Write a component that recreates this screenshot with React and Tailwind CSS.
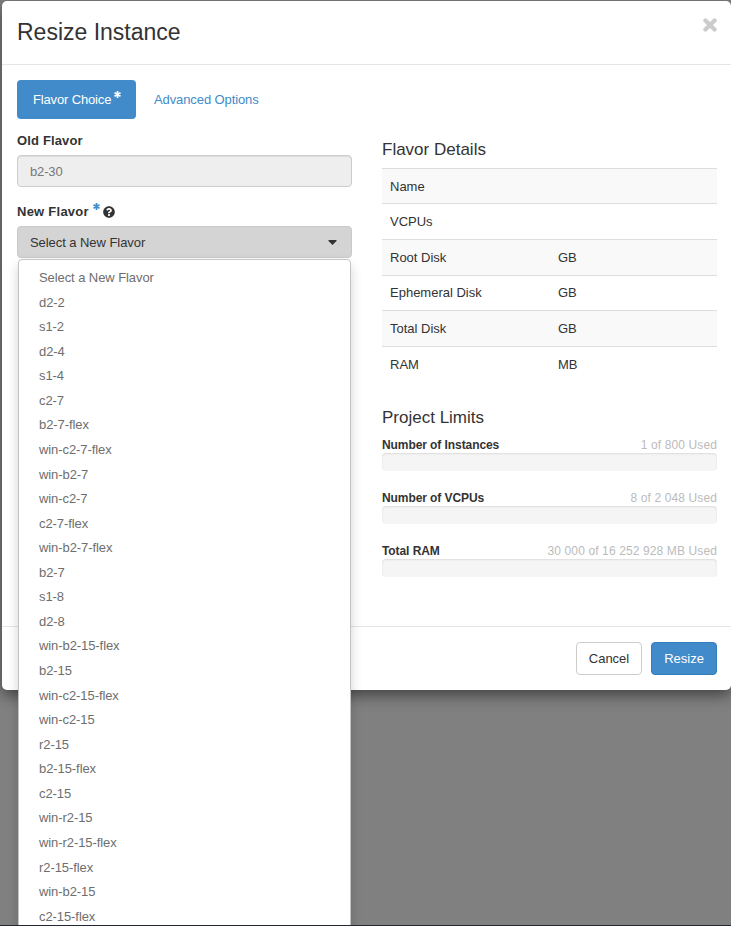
import React from "react";
import { FaQuestionCircle } from "react-icons/fa";

const FLAVORS = [
  "Select a New Flavor", "d2-2", "s1-2", "d2-4", "s1-4", "c2-7", "b2-7-flex",
  "win-c2-7-flex", "win-b2-7", "win-c2-7", "c2-7-flex", "win-b2-7-flex", "b2-7",
  "s1-8", "d2-8", "win-b2-15-flex", "b2-15", "win-c2-15-flex", "win-c2-15",
  "r2-15", "b2-15-flex", "c2-15", "win-r2-15", "win-r2-15-flex", "r2-15-flex",
  "win-b2-15", "c2-15-flex",
];

const DETAILS = [
  ["Name", "", "h-[35px] pt-px"],
  ["VCPUs", "", "h-[36px]"],
  ["Root Disk", "GB", "h-[36px]"],
  ["Ephemeral Disk", "GB", "h-[35px]"],
  ["Total Disk", "GB", "h-[36px]"],
  ["RAM", "MB", "h-[36px]"],
];

const LIMITS = [
  ["Number of Instances", "1 of 800 Used"],
  ["Number of VCPUs", "8 of 2 048 Used"],
  ["Total RAM", "30 000 of 16 252 928 MB Used"],
];

function Asterisk({ className }) {
  return (
    <svg viewBox="0 0 7 7" className={className} stroke="currentColor" strokeWidth="1.7">
      <path d="M3.5 0v7M.5 1.8l6 3.4M.5 5.2l6-3.4" />
    </svg>
  );
}

function CloseIcon({ className }) {
  return (
    <svg viewBox="0 0 14 14" className={className} stroke="currentColor" strokeWidth="4.2" strokeLinecap="round">
      <path d="M2.4 2.4l9.2 9.2M11.6 2.4l-9.2 9.2" />
    </svg>
  );
}

function FlavorMenu() {
  return (
    <ul className="absolute left-px top-full mt-px h-[700px] w-[333px] rounded border border-[#c4c4c4] bg-white py-[5px] shadow-[0_6px_12px_rgba(0,0,0,0.175)]">
      {FLAVORS.map((name) => (
        <li key={name} className="h-[24.57px] px-5 leading-[25px] tracking-[-0.08px] text-[#6e6e6e]">
          {name}
        </li>
      ))}
    </ul>
  );
}

function FlavorForm() {
  return (
    <div className="w-[335px] shrink-0 pt-3">
      <label className="block h-[24px] font-bold leading-[19px] tracking-[0.15px]">Old Flavor</label>
      <div className="flex h-8 items-center rounded border border-[#ccc] bg-[#eee] px-3 pt-px text-[#777] tracking-[-0.15px] shadow-[inset_0_1px_1px_rgba(0,0,0,0.075)]">
        b2-30
      </div>
      <div className="mt-[15px] flex h-6 items-start leading-[19px]">
        <label className="w-[76px] font-bold tracking-[0.25px]">New Flavor</label>
        <Asterisk className="mt-px size-[7px] text-[#428bca]" />
        <FaQuestionCircle className="ml-[3px] mt-[4px] size-[12px]" />
      </div>
      <div className="relative">
        <button className="flex h-8 w-full items-center justify-between rounded border border-[#c9c9c9] bg-[#d4d4d4] pl-3 pr-[14px]">
          <span className="pt-px tracking-[-0.06px]">Select a New Flavor</span>
          <svg width="9" height="5" viewBox="0 0 9 5" fill="#333">
            <path d="M.5 0h8v1L4.5 5 .5 1z" />
          </svg>
        </button>
        <FlavorMenu />
      </div>
    </div>
  );
}

function FlavorInfo() {
  return (
    <div className="w-[335px] shrink-0 pt-[21px]">
      <h4 className="h-[28px] text-[17px] leading-[20px]">Flavor Details</h4>
      <div>
        {DETAILS.map(([name, unit, height]) => (
          <div key={name} className={`flex items-center border-t border-[#ddd] px-2 odd:bg-[#f9f9f9] ${height}`}>
            <span className="w-[168px]">{name}</span>
            <span>{unit}</span>
          </div>
        ))}
      </div>
      <h4 className="mt-[26px] h-[29px] text-[17px] leading-[20px]">Project Limits</h4>
      {LIMITS.map(([name, used]) => (
        <div key={name} className="h-[53px] text-[12px]">
          <div className="flex h-[16px] items-center justify-between leading-[16px]">
            <strong className="tracking-[-0.08px]">{name}</strong>
            <span className="tracking-[0.12px] text-[#bbb]">{used}</span>
          </div>
          <div className="h-[18px] rounded bg-[#f5f5f5] shadow-[inset_0_1px_2px_rgba(0,0,0,0.1)]" />
        </div>
      ))}
    </div>
  );
}

export default function App() {
  return (
    <div className="flex h-[926px] w-[731px] flex-col overflow-hidden bg-[#808080] font-['Liberation_Sans',Arial,sans-serif] text-[13px] text-[#333]">
      <div className="h-[925px] overflow-hidden pl-[2px] pt-px">
        <div className="flex h-[689px] w-[729px] flex-col rounded-[5px] bg-white shadow-[0_5px_15px_rgba(0,0,0,0.5)]">
          <header className="flex h-16 shrink-0 items-start justify-between border-b border-[#e5e5e5] pl-[15px] pr-[14px]">
            <h3 className="pt-[14px] text-[23px] leading-[34px]">Resize Instance</h3>
            <CloseIcon className="mt-[17px] size-[14px] text-[#ccc]" />
          </header>
          <main className="h-[561px] shrink-0 px-[15px] pt-[15px]">
            <nav className="flex h-[39px] gap-[3px]">
              <a className="flex w-[119px] items-center rounded bg-[#428bca] pl-4 text-white">
                <span className="w-[81px] tracking-[-0.15px]">Flavor Choice</span>
                <Asterisk className="mb-[11px] size-[7px]" />
              </a>
              <a className="flex items-center px-[15px] text-[#428bca] tracking-[-0.1px]">Advanced Options</a>
            </nav>
            <div className="flex items-start gap-[30px]">
              <FlavorForm />
              <FlavorInfo />
            </div>
          </main>
          <footer className="flex h-16 shrink-0 items-start justify-end gap-[9px] border-t border-[#e5e5e5] pr-[14px] pt-[15px]">
            <button className="h-[33px] w-[66px] rounded border border-[#ccc] bg-white">Cancel</button>
            <button className="h-[33px] w-[66px] rounded border border-[#357ebd] bg-[#428bca] text-white">Resize</button>
          </footer>
        </div>
      </div>
      <div className="h-px bg-[#202833]" />
    </div>
  );
}
